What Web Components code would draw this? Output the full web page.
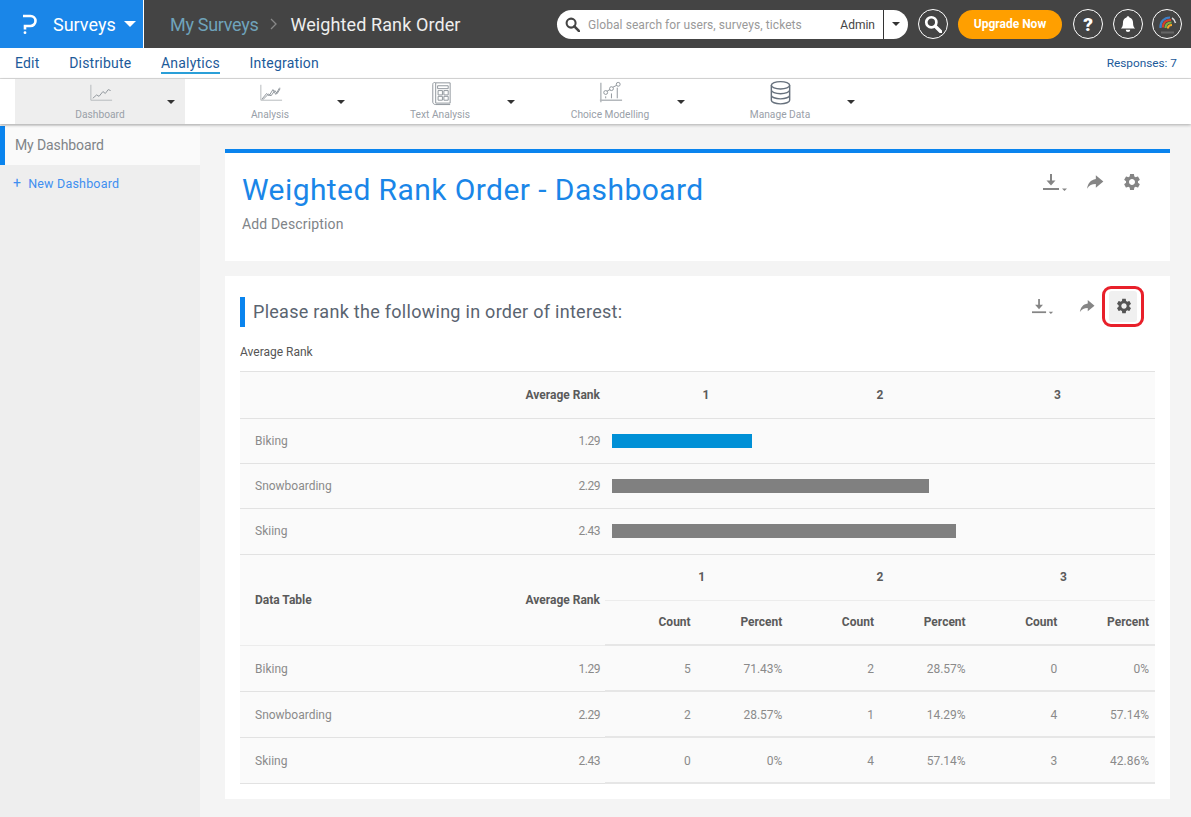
<!DOCTYPE html>
<html>
<head>
<meta charset="utf-8">
<title>Weighted Rank Order - Dashboard</title>
<style>
html, body { margin: 0; height: 817px; overflow: hidden; background: #f4f4f4; font-family: Roboto, "Liberation Sans", sans-serif; }
body { display: flex; flex-direction: column; }
</style>
</head>
<body>
<top-bar></top-bar>
<sub-nav></sub-nav>
<tool-bar>
  <tool-item label="Dashboard" icon="dashboard" active></tool-item>
  <tool-item label="Analysis" icon="analysis"></tool-item>
  <tool-item label="Text Analysis" icon="text"></tool-item>
  <tool-item label="Choice Modelling" icon="choice"></tool-item>
  <tool-item label="Manage Data" icon="data"></tool-item>
</tool-bar>
<dash-page>
  <dash-side slot="side"></dash-side>
  <title-card></title-card>
  <question-card heading="Please rank the following in order of interest:">
    <rank-chart></rank-chart>
    <data-table></data-table>
  </question-card>
</dash-page>

<script>
const GEAR = "M19.14 12.94c.04-.3.06-.61.06-.94 0-.32-.02-.64-.07-.94l2.03-1.58c.18-.14.23-.41.12-.61l-1.92-3.32c-.12-.22-.37-.29-.59-.22l-2.39.96c-.5-.38-1.03-.7-1.62-.94l-.36-2.54c-.04-.24-.24-.41-.48-.41h-3.84c-.24 0-.43.17-.47.41l-.36 2.54c-.59.24-1.13.57-1.62.94l-2.39-.96c-.22-.08-.47 0-.59.22L2.74 8.87c-.12.21-.08.47.12.61l2.03 1.58c-.05.3-.09.63-.09.94s.02.64.07.94l-2.03 1.58c-.18.14-.23.41-.12.61l1.92 3.32c.12.22.37.29.59.22l2.39-.96c.5.38 1.03.7 1.62.94l.36 2.54c.05.24.24.41.48.41h3.84c.24 0 .44-.17.47-.41l.36-2.54c.59-.24 1.13-.56 1.62-.94l2.39.96c.22.08.47 0 .59-.22l1.92-3.32c.12-.22.07-.47-.12-.61l-2.01-1.58zM12 15.6c-1.98 0-3.6-1.62-3.6-3.6s1.62-3.6 3.6-3.6 3.6 1.62 3.6 3.6-1.62 3.6-3.6 3.6z";
const SHARE = "M13 8.500V4l9 7.500-9 7.500v-4.500c-5 0-8 1.500-10.500 5.500C3.500 14 6.500 9.500 13 8.500z";

const TOOL_ICONS = {
  dashboard: `<path d="M4 6v16h22" stroke="#b4b8bc"/><path d="M6 20l4-3.500 2.500 1.500 4-5 2.500 2 3-4 2.500 1"/>`,
  analysis: `<path d="M4 6v16h22" stroke="#b4b8bc"/><path d="M5 21l5-6 2.500 2.500 4-6.500 3 5 4-7M6 21.500l6-6 2.500 2 4-5.500 2.500 3 3-5"/>`,
  text: `<path d="M9 4h15v21H9zM6 5.500c0-1.500 1.500-2.500 3-1.500M6 5.500V24c0 1 1 2.500 3 2.500h15M11 7h11v3H11zM11.500 12h4.500v4.500h-4.500zM17.500 12H22v4.500h-4.500zM11.500 18h4.500v4h-4.500zM17.500 18H22v4h-4.500z"/>`,
  choice: `<path d="M4 4v20M3 22h23" stroke="#b4b8bc" stroke-width="1.500"/><path d="M9 20v-2M15 20v-5M21 20V9"/><circle cx="9" cy="14" r="2"/><circle cx="15" cy="10" r="2"/><circle cx="22" cy="5.500" r="2"/><path d="M10.500 12.500l3-1.500M16.500 8.500l4-2"/>`,
  data: `<g stroke="#66707c" stroke-width="1.500"><ellipse cx="14" cy="6.500" rx="9.500" ry="3.800"/><path d="M4.500 6.500v15.500c0 2 4.200 3.800 9.500 3.800s9.500-1.800 9.500-3.800V6.500M4.500 11.500c0 2 4.200 3.800 9.500 3.800s9.500-1.800 9.500-3.800M4.500 16.800c0 2 4.200 3.800 9.500 3.800s9.500-1.800 9.500-3.800"/></g>`
};

class TopBar extends HTMLElement {
  constructor() {
    super();
    this.attachShadow({mode: "open"}).innerHTML = `
<style>
:host { display: flex; height: 48px; background: #444; flex: none; align-items: center; }
.brand { width: 143px; height: 48px; background: #1a86e8; border-right: 1px solid #fff; display: flex; align-items: center; color: #fff; font-size: 18px; flex: none; }
.brand svg { margin-left: 21px; width: 16px; height: 22px; flex: none; }
.brand span { margin-left: 16px; }
.brand i { margin-left: 8px; border: 6px solid transparent; border-top: 6px solid #fff; border-bottom: 0; }
.crumbs { margin-left: 26px; font-size: 18px; color: #eee; display: flex; align-items: center; flex: none; width: 387px; }
.crumbs a { color: #6fa3bb; letter-spacing: -.3px; }
.crumbs svg { margin: 0 13px 0 12px; width: 7px; height: 12px; flex: none; }
.crumbs span { letter-spacing: .1px; }
.search { width: 351px; height: 29px; background: #fff; border-radius: 15px; display: flex; align-items: center; flex: none; font-size: 12px; color: #999; }
.search svg { margin-left: 8px; width: 15px; height: 15px; flex: none; }
.search .ph { margin-left: 8px; flex: 1; white-space: nowrap; letter-spacing: .08px; padding-top: 1px; }
.search .who { color: #444; padding: 1px 8px 0 0; }
.search .caret { width: 25px; height: 29px; border-left: 1px solid #333; display: flex; align-items: center; justify-content: center; box-sizing: border-box; }
.search .caret i { border: 4px solid transparent; border-top: 4px solid #333; border-bottom: 0; }
.round { width: 28px; height: 28px; border: 1px solid #fff; border-radius: 50%; display: flex; align-items: center; justify-content: center; flex: none; overflow: hidden; color: #fff; font-weight: 900; font-size: 19px; }
.round svg { width: 18px; height: 18px; }
.upgrade { width: 104px; height: 29px; border-radius: 15px; background: #ff9f00; color: #fff; font-size: 12px; font-weight: 700; display: flex; align-items: center; justify-content: center; flex: none; margin: 0 11px 0 10px; }
</style>
<div class="brand">
  <svg viewBox="0 0 16 22"><path d="M2 3h7.500a5 5 0 0 1 0 10H4v3.500" fill="none" stroke="#fff" stroke-width="2.600"/><circle cx="4" cy="19.700" r="1.400" fill="#fff"/></svg>
  <span>Surveys</span><i></i>
</div>
<div class="crumbs"><a>My Surveys</a><svg viewBox="0 0 7 12"><path d="M1 1l5 5-5 5" fill="none" stroke="#888" stroke-width="1.300"/></svg><span>Weighted Rank Order</span></div>
<div class="search">
  <svg viewBox="0 0 16 16"><circle cx="6.500" cy="6.500" r="4.800" fill="none" stroke="#444" stroke-width="2.200"/><path d="M10 10l5 5" stroke="#444" stroke-width="2.800" stroke-linecap="round"/></svg>
  <span class="ph">Global search for users, surveys, tickets</span>
  <span class="who">Admin</span>
  <span class="caret"><i></i></span>
</div>
<div class="round" style="margin-left:10px"><svg viewBox="0 0 16 16"><circle cx="6.500" cy="6.500" r="4.500" fill="none" stroke="#fff" stroke-width="2.400"/><path d="M10 10l5 5" stroke="#fff" stroke-width="3" stroke-linecap="round"/></svg></div>
<div class="upgrade">Upgrade Now</div>
<div class="round">?</div>
<div class="round" style="margin-left:10px"><svg viewBox="0 0 16 16"><path d="M8 1c.800 0 1.200.500 1.300 1.200C11.500 3 12.500 4.500 12.500 7c0 2.500.500 3.500 1.800 5H1.700C3 10.500 3.500 9.500 3.500 7c0-2.500 1-4 3.200-4.800C6.800 1.500 7.200 1 8 1zM6 13h4a2 2 0 0 1-4 0z" fill="#fff"/></svg></div>
<div class="round" style="margin-left:9px"><svg viewBox="0 0 24 24" style="width:24px;height:24px" fill="none" stroke-width="2.200"><path d="M5.500 16C5 10 9 5.500 15 5.500" stroke="#3f7fc4"/><path d="M8 15.500C8 10.500 11 8 16 8" stroke="#d9402b"/><path d="M10.500 16c0-3.500 2-5.500 6-5.500" stroke="#7cb342"/><path d="M13 16.500c0-2 1.500-3.500 4-3.500" stroke="#f9a825"/><path d="M17 6c2 1 3 2.500 3.500 5" stroke="#ddd" stroke-width="1.500"/><path d="M6 20.500h13" stroke="#666" stroke-width="2"/></svg></div>
`;
  }
}

class SubNav extends HTMLElement {
  constructor() {
    super();
    this.attachShadow({mode: "open"}).innerHTML = `
<style>
:host { display: flex; height: 31px; background: #fff; border-bottom: 1px solid #ddd; flex: none; box-sizing: border-box; padding: 0 14px 0 15px; font-size: 14px; letter-spacing: .2px; color: #1c5a9a; align-items: center; gap: 29.700px; }
a { padding-bottom: 1px; line-height: 16px; }
a.on { border-bottom: 2px solid #2a9fd8; margin-top: 2px; }
.resp { margin-left: auto; font-size: 11.800px; letter-spacing: 0; }
</style>
<a>Edit</a><a>Distribute</a><a class="on">Analytics</a><a>Integration</a><span class="resp">Responses: 7</span>
`;
  }
}

class ToolBar extends HTMLElement {
  constructor() {
    super();
    this.attachShadow({mode: "open"}).innerHTML = `
<style>
:host { display: flex; height: 45px; background: #fff; padding-left: 15px; flex: none; box-shadow: 0 1px 3px rgba(0,0,0,.3); position: relative; z-index: 2; }
</style>
<slot></slot>
`;
  }
}

class ToolItem extends HTMLElement {
  constructor() {
    super();
    this.attachShadow({mode: "open"}).innerHTML = `
<style>
:host { display: block; width: 170px; height: 45px; position: relative; text-align: center; font-size: 10.200px; color: #99a0a8; }
:host([active]) { background: #eee; }
svg { display: block; width: 27px; height: 27px; margin: 0 auto; fill: none; stroke: #8f959b; stroke-width: 1; }
span { display: block; line-height: 14px; margin-top: 2px; }
i { position: absolute; right: 10px; top: 21px; border: 4px solid transparent; border-top: 4px solid #333; border-bottom: 0; }
</style>
<svg viewBox="0 0 28 28"></svg><span></span><i></i>
`;
  }
  connectedCallback() {
    this.shadowRoot.querySelector("span").textContent = this.getAttribute("label");
    this.shadowRoot.querySelector("svg").innerHTML = TOOL_ICONS[this.getAttribute("icon")];
  }
}

class DashPage extends HTMLElement {
  constructor() {
    super();
    this.attachShadow({mode: "open"}).innerHTML = `
<style>
:host { display: flex; flex: 1; min-height: 0; }
main { flex: 1; padding: 25px 21px 0 25px; display: flex; flex-direction: column; gap: 15px; min-width: 0; }
</style>
<slot name="side"></slot>
<main><slot></slot></main>
`;
  }
}

class DashSide extends HTMLElement {
  constructor() {
    super();
    this.attachShadow({mode: "open"}).innerHTML = `
<style>
:host { display: block; width: 200px; background: #eee; flex: none; padding-top: 2px; }
.cur { height: 39px; background: #fafafa; border-left: 5px solid #0a84ee; padding-left: 10px; font-size: 14px; color: #808488; line-height: 39px; letter-spacing: -.1px; }
.new { margin: 9px 0 0 13px; font-size: 12.500px; color: #3f8ff0; line-height: 18px; letter-spacing: .2px; }
.new b { font-weight: 400; margin-right: 7px; font-size: 14px; }
</style>
<div class="cur">My Dashboard</div>
<div class="new"><b>+</b>New Dashboard</div>
`;
  }
}

class ActionIcons extends HTMLElement {
  constructor() {
    super();
    this.attachShadow({mode: "open"}).innerHTML = `
<style>
:host { display: flex; align-items: center; position: absolute; }
svg { display: block; flex: none; }
.dl { width: 25px; height: 17px; }
.sh { width: 20px; height: 20px; margin-left: 17px; }
.ge { width: 20px; height: 20px; margin-left: 17px; }
:host([small]) .dl { width: 22px; height: 15px; }
:host([small]) .sh { width: 18px; height: 18px; margin-left: 24px; }
:host([small]) .ge { width: 18px; height: 18px; margin-left: 19px; }
</style>
<svg class="dl" viewBox="0 0 25 17"><path d="M8 0v9" stroke="#858585" stroke-width="2"/><path d="M3.500 6.500h9l-4.500 5z" fill="#858585"/><path d="M0 15h16" stroke="#858585" stroke-width="2"/><path d="M19 14.500h5l-2.500 2.500z" fill="#858585"/></svg>
<svg class="sh" viewBox="0 0 24 24"><path d="${SHARE}" fill="#858585"/></svg>
<svg class="ge" viewBox="0 0 24 24"><path d="${GEAR}" fill="${this.getAttribute("gear") || "#858585"}"/></svg>
`;
  }
}

class TitleCard extends HTMLElement {
  constructor() {
    super();
    this.attachShadow({mode: "open"}).innerHTML = `
<style>
:host { display: block; height: 112px; background: #fff; border-top: 4px solid #0a84ee; box-sizing: border-box; padding: 19px 17px 0; position: relative; flex: none; }
h1 { margin: 0; font-weight: 400; font-size: 30px; line-height: 36px; color: #1a86e8; letter-spacing: .42px; }
p { margin: 6px 0 0; font-size: 14px; line-height: 20px; color: #808488; letter-spacing: .15px; }
action-icons { top: 19px; right: 28px; }
</style>
<h1>Weighted Rank Order - Dashboard</h1>
<p>Add Description</p>
<action-icons></action-icons>
`;
  }
}

class QuestionCard extends HTMLElement {
  constructor() {
    super();
    this.attachShadow({mode: "open"}).innerHTML = `
<style>
:host { display: block; height: 523px; background: #fff; box-sizing: border-box; padding: 21px 15px 0; position: relative; flex: none; }
h2 { margin: 0; font-weight: 400; font-size: 18px; line-height: 30px; color: #5a6470; border-left: 5px solid #0a84ee; padding-left: 8px; letter-spacing: .28px; }
p { margin: 16px 0 10px; font-size: 12px; line-height: 18px; color: #555; }
action-icons { top: 21px; right: 37px; }
.hl { position: absolute; left: 877px; top: 10px; width: 36px; height: 35px; border: 3px solid #e8202a; border-radius: 9px; }
.hl::before { content: ""; position: absolute; inset: 2px 4px; background: #f0f0f0; border-radius: 3px; }
</style>
<h2></h2>
<p>Average Rank</p>
<slot></slot>
<div class="hl"></div>
<action-icons small gear="#555"></action-icons>
`;
  }
  connectedCallback() {
    this.shadowRoot.querySelector("h2").textContent = this.getAttribute("heading");
  }
}

const TABLE_CSS = `
:host { display: block; font-size: 12px; color: #8a8a8a; }
table { width: 915px; border-collapse: collapse; table-layout: fixed; background: #fafafa; }
th { font-weight: 700; color: #5a5a5a; padding: 0; }
td { padding: 0; }
th, td { border-bottom: 1px solid #e2e2e2; }
.split { display: flex; justify-content: space-between; padding-left: 15px; text-align: left; }
.num { letter-spacing: -.5px; }
`;

class RankChart extends HTMLElement {
  constructor() {
    super();
    const rows = [["Biking", "1.29", 140, "#0090d6", 45], ["Snowboarding", "2.29", 317, "#808080", 45], ["Skiing", "2.43", 344, "#808080", 46]];
    this.attachShadow({mode: "open"}).innerHTML = `
<style>
${TABLE_CSS}
table { border-top: 1px solid #e2e2e2; }
.split { padding-right: 12px; }
.bar { height: 14px; }
tr:last-child td { padding-bottom: 1px; }
</style>
<table>
<colgroup><col style="width:372px"><col style="width:188px"><col style="width:160px"><col></colgroup>
<tr style="height:47px"><th><div class="split"><span></span><span>Average Rank</span></div></th><th>1</th><th>2</th><th>3</th></tr>
${rows.map(r => `<tr style="height:${r[4]}px"><td><div class="split"><span>${r[0]}</span><span class="num">${r[1]}</span></div></td><td colspan="3"><div class="bar" style="width:${r[2]}px;background:${r[3]}"></div></td></tr>`).join("")}
</table>
`;
  }
}

class DataTable extends HTMLElement {
  constructor() {
    super();
    const rows = [
      ["Biking", "1.29", "5", "71.43%", "2", "28.57%", "0", "0%"],
      ["Snowboarding", "2.29", "2", "28.57%", "1", "14.29%", "4", "57.14%"],
      ["Skiing", "2.43", "0", "0%", "4", "57.14%", "3", "42.86%"]
    ];
    this.attachShadow({mode: "open"}).innerHTML = `
<style>
${TABLE_CSS}
tr { height: 46px; }
.split { padding-right: 5px; }
.c { text-align: right; padding-right: 6px; }
th.c, td.c { border-bottom-width: 2px; border-bottom-color: #e6e6e6; }
.g th { border-bottom-color: #ececec; }
.body td { padding-top: 1px; }
</style>
<table>
<colgroup><col style="width:365px"><col span="6" style="width:91.660px"></colgroup>
<tr class="g" style="height:45px"><th rowspan="2"><div class="split"><span>Data Table</span><span>Average Rank</span></div></th>
<th colspan="2" style="padding-left:10px">1</th><th colspan="2">2</th><th colspan="2">3</th></tr>
<tr style="height:45px">${"<th class='c'>Count</th><th class='c'>Percent</th>".repeat(3)}</tr>
${rows.map(r => `<tr class="body"><td><div class="split"><span>${r[0]}</span><span class="num">${r[1]}</span></div></td>${r.slice(2).map(v => `<td class="c">${v}</td>`).join("")}</tr>`).join("")}
</table>
`;
  }
}

customElements.define("top-bar", TopBar);
customElements.define("sub-nav", SubNav);
customElements.define("tool-bar", ToolBar);
customElements.define("tool-item", ToolItem);
customElements.define("dash-page", DashPage);
customElements.define("dash-side", DashSide);
customElements.define("action-icons", ActionIcons);
customElements.define("title-card", TitleCard);
customElements.define("question-card", QuestionCard);
customElements.define("rank-chart", RankChart);
customElements.define("data-table", DataTable);
</script>
</body>
</html>
